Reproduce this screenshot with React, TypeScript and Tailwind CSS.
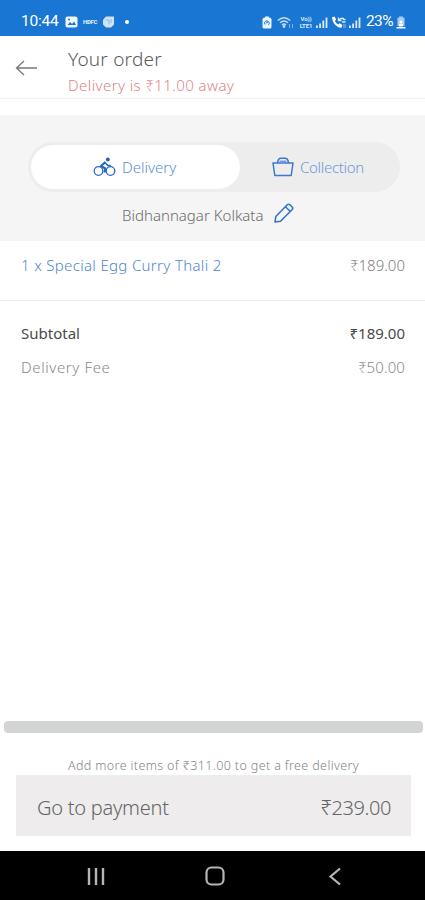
import type { ReactNode } from "react";

function StatusBar() {
  return (
    <div className="flex h-9 shrink-0 items-center bg-[#1976d2] pt-2 pl-[21px] pr-[19px] font-normal text-white font-[Roboto,sans-serif]">
      <span className="w-[38px] text-[15.5px] leading-none tracking-[-0.2px] whitespace-nowrap">10:44</span>
      <svg className="ml-[6px]" width="13" height="12" viewBox="0 0 13 12">
        <rect x="0.5" y="0.5" width="12" height="11" rx="2" fill="#f2f8ff" />
        <path d="M2.5 9l2.5-3 2 2 2-2.500 2 3.500z" fill="#1976d2" />
        <circle cx="4" cy="3.500" r="1" fill="#1976d2" />
      </svg>
      <span className="ml-[5px] w-[14px] text-[6px] leading-[6px] font-black tracking-[-0.3px] text-[#dcebfa]">HDFC</span>
      <svg className="ml-[5px]" width="13" height="12" viewBox="0 0 13 12">
        <path d="M3 1.500Q3.500 0.500 5 0.500h7v8L9 11.500H4L1 8.500V4z" fill="#cfe3f8" />
        <path d="M4 4h3v4.500M9 3v4" stroke="#8dbdec" fill="none" />
      </svg>
      <span className="ml-[10px] size-1 rounded-full bg-white" />
      <svg className="ml-auto" width="10" height="13" viewBox="0 0 10 13">
        <path d="M3 0.500h4v1.300h1.500l1 1.200v8.500l-1 1h-7l-1-1V3l1-1.200H3z" fill="#eaf4ff" />
        <path d="M3 8.500a2.300 2.300 0 1 1 3.500 0.300M4 7l2-1" stroke="#1976d2" fill="none" />
      </svg>
      <svg className="ml-[5px]" width="17" height="13" viewBox="0 0 17 13" fill="none" stroke="#c4ddf6" strokeWidth="1.400">
        <path d="M0.800 4.500Q7 -1 13.200 4.500M3 6.800q4-3.500 8 0M5 9q2-1.800 4 0" />
        <circle cx="7" cy="10.500" r="0.700" fill="#c4ddf6" />
        <path d="M12.500 8v4M15.500 8v4" strokeWidth="1" opacity="0.6" />
      </svg>
      <span className="ml-[4px] flex w-[16px] flex-col text-center text-[6px] leading-[7px] font-bold tracking-[-0.1px] text-[#dcebfa]">
        <span>Vo))</span>
        <span className="whitespace-nowrap">LTE1</span>
      </span>
      <Signal className="ml-[2px]" />
      <svg className="ml-[3px]" width="16" height="13" viewBox="0 0 16 13">
        <path d="M1 1.200l2.600-.7 1.500 3-1.200 1.400q1 2.200 3.200 3.500l1.500-1.200 2.800 1.700-.8 2.600Q8.500 12.500 5 9.500T1 1.200z" fill="#fff" />
        <path d="M7.500 1.500v3h3M8 4l2-1.500h3M12 3.500h2.500M11 6h3.500" stroke="#d6e8fa" strokeWidth="1.400" fill="none" />
        <path d="M12 9h3M12 11h3" stroke="#8dbdec" fill="none" />
      </svg>
      <Signal className="ml-[2px]" />
      <span className="ml-[5px] w-[29px] text-[15.500px] leading-none tracking-[-0.600px] whitespace-nowrap">23%</span>
      <svg className="ml-[1px]" width="10" height="13" viewBox="0 0 10 13">
        <path d="M3 0.500h4v1.300h1.500V10h-7V1.800H3z" fill="#a9cdf2" />
        <path d="M0.500 11h9v1.600h-9zM3 8h4v2.500H3z" fill="#fff" />
        <circle cx="5" cy="6" r="1.500" fill="#fff" />
      </svg>
    </div>
  );
}

function Signal({ className }: { className: string }) {
  return (
    <svg className={className} width="12" height="13" viewBox="0 0 12 13" fill="#dcebfa">
      <path d="M0 9.500h1.800V12H0zM3.200 7.500H5V12H3.200zM6.400 4.500h1.800V12H6.400zM9.600 1.500h1.800V12H9.600z" />
    </svg>
  );
}

function BikeIcon() {
  return (
    <svg width="23" height="20" viewBox="0 0 23 20" fill="none" stroke="#2469c9">
      <circle cx="5.500" cy="14" r="4.300" strokeWidth="1.300" />
      <circle cx="17.500" cy="14" r="4.300" strokeWidth="1.300" />
      <path d="M12.500 5L8 9l4.300 2.500-.8 4" strokeWidth="2.200" strokeLinejoin="round" />
      <path d="M11.500 5l3.300 3.500h3" strokeWidth="1.600" />
      <circle cx="14.800" cy="2.500" r="1.900" fill="#1f5fc4" stroke="none" />
    </svg>
  );
}

function BasketIcon() {
  return (
    <svg width="22" height="20" viewBox="0 0 22 20" fill="none" stroke="#3b78d0" strokeWidth="1.500" strokeLinejoin="round">
      <path d="M1 6h20l-1.800 12.500H2.800z" />
      <path d="M5.500 6Q6 1.200 9 1.200h4q3 0 3.500 4.800" />
      <path d="M7.500 4.200h7" strokeWidth="1" />
    </svg>
  );
}

function PencilIcon() {
  return (
    <svg width="20" height="20" viewBox="0 0 20 20" fill="none" stroke="#3474cf" strokeWidth="1.600" strokeLinejoin="round">
      <path d="M1 19l.8-5.500L13 2q1.500-1.500 3.200 0L18 3.800q1.500 1.500 0 3L6.500 18.200z" />
      <path d="M11.500 3.700l4.800 4.800" />
    </svg>
  );
}

function Row({ children, className }: { children: ReactNode; className: string }) {
  return <div className={`flex h-6 items-center justify-between pl-[21px] pr-5 ${className}`}>{children}</div>;
}

export default function App() {
  return (
    <div className="flex h-[900px] w-[425px] flex-col overflow-hidden bg-white whitespace-nowrap font-light font-['Noto_Sans',sans-serif]">
      <StatusBar />
      <header className="flex h-[63px] shrink-0 border-b border-[#f0f0f0]">
        <svg className="mt-[24px] ml-[15px]" width="23" height="16" viewBox="0 0 23 16" fill="none" stroke="#777" strokeWidth="1.300">
          <path d="M22 8H1.500M9 1L1.500 8L9 15" />
        </svg>
        <div className="ml-[30px] flex flex-col pt-[11px]">
          <h1 className="h-6 text-[19px] leading-6 tracking-[0.2px] text-[#5c5c5c]">Your order</h1>
          <p className="mt-[3px] h-[22px] text-[15px] leading-[22px] tracking-[0.4px] text-[#dd8585]">Delivery is ₹11.00 away</p>
        </div>
      </header>

      <section className="mt-4 h-[126px] shrink-0 bg-[#f5f5f5] pt-[27px]">
        <div className="mr-[25px] ml-7 flex h-[50px] rounded-full bg-[#ededed] p-[3px]">
          <button className="flex h-[44px] w-[209px] items-center rounded-full bg-white pl-[62px] text-[15px] text-[#5b90d3]">
            <BikeIcon />
            <span className="ml-[6px] pt-px">Delivery</span>
          </button>
          <button className="flex h-[44px] items-center pl-[32px] text-[15px] tracking-[-0.3px] text-[#6d9ad6]">
            <BasketIcon />
            <span className="ml-[6px] pt-px">Collection</span>
          </button>
        </div>
        <div className="mt-[11px] flex h-6 items-center pl-[122px] text-[15px] text-[#6b6b6b]">
          <span className="w-[142px]">Bidhannagar Kolkata</span>
          <span className="ml-[10px] -mt-1">
            <PencilIcon />
          </span>
        </div>
      </section>

      <div className="h-[60px] shrink-0 border-b border-[#ebebeb] pt-3">
        <Row className="text-[15px]">
          <span className="tracking-[0.33px] text-[#4f86cf]">1 x Special Egg Curry Thali 2</span>
          <span className="text-[#7d7d7d]">₹189.00</span>
        </Row>
      </div>
      <Row className="mt-5 text-[15px] font-normal text-[#4a4a4a]">
        <span>Subtotal</span>
        <span>₹189.00</span>
      </Row>
      <Row className="mt-[10px] text-[15px] text-[#888]">
        <span className="tracking-[0.6px]">Delivery Fee</span>
        <span className="tracking-[0.1px]">₹50.00</span>
      </Row>

      <footer className="mt-auto shrink-0">
        <div className="mr-[2px] ml-1 h-3 rounded-sm bg-[#d2d5d3]" />
        <p className="mt-[23px] h-[19px] pl-[68px] text-[12.500px] leading-[20px] tracking-[0.37px] text-[#808585]">
          Add more items of ₹311.00 to get a free delivery
        </p>
        <button className="mr-[14px] ml-4 flex h-[61px] w-[395px] items-center justify-between bg-[#efeced] px-5 pt-[5px] pl-[21px] text-[20px] text-[#646464]">
          <span className="tracking-[-0.25px]">Go to payment</span>
          <span className="tracking-[-0.4px]">₹239.00</span>
        </button>
        <nav className="mt-[15px] flex h-[49px] bg-black pl-[87px]">
          <svg className="mt-4" width="18" height="19" viewBox="0 0 18 19" stroke="#b5b5b5" strokeWidth="2.400">
            <path d="M2 1v17M9 1v17M16 1v17" />
          </svg>
          <svg className="mt-[15px] ml-[100px]" width="20" height="20" viewBox="0 0 20 20" fill="none" stroke="#b5b5b5" strokeWidth="2.200">
            <rect x="1.500" y="1.500" width="17" height="17" rx="5" />
          </svg>
          <svg className="mt-4 ml-[103px]" width="14" height="20" viewBox="0 0 14 20" fill="none" stroke="#b5b5b5" strokeWidth="2.200">
            <path d="M12 1.500L2.500 9.500L12 17.500" />
          </svg>
        </nav>
      </footer>
    </div>
  );
}
